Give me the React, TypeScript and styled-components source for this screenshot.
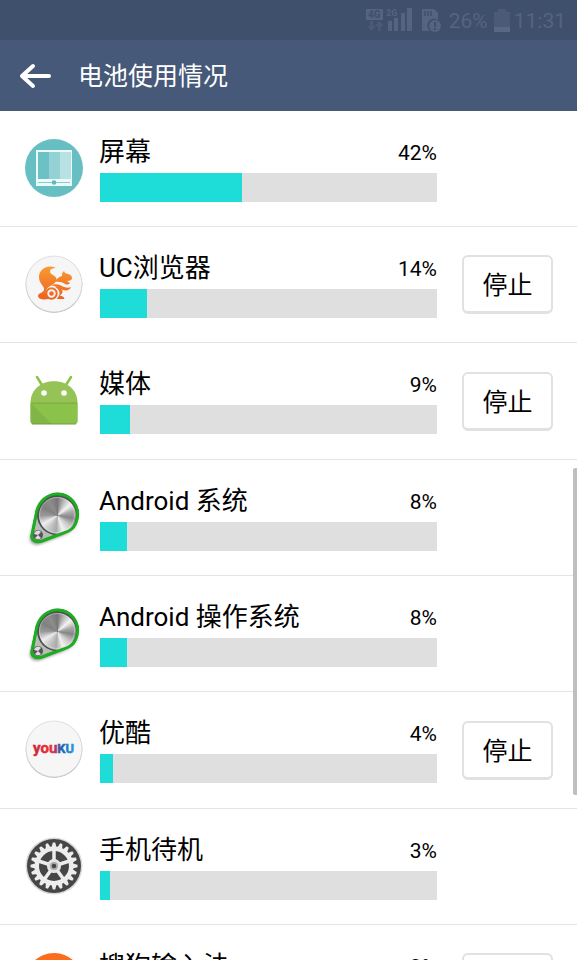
import React from "react";
import styled, { createGlobalStyle } from "styled-components";

const GlobalStyle = createGlobalStyle`
  * { box-sizing: border-box; }
  body {
    margin: 0;
    background: #fff;
    color: #000;
    font-family: Roboto, "Noto Sans CJK SC", sans-serif;
  }
`;

const Screen = styled.div`
  position: relative;
  display: flex;
  flex-direction: column;
  height: 100vh;
  overflow: hidden;
`;

const StatusBar = styled.div`
  display: flex;
  flex: none;
  align-items: center;
  justify-content: flex-end;
  height: 40px;
  padding-right: 11px;
  background: #3f506d;
  color: #55647f;
  font-size: 21px;
  line-height: 24px;
`;

const StatusText = styled.span`
  margin: 2px 6px 0 7px;
`;

const Clock = styled.time`
  margin: 2px 0 0 4px;
`;

const Header = styled.header`
  display: flex;
  flex: none;
  align-items: center;
  height: 71px;
  padding-left: 18px;
  background: #465978;
  color: #fff;
`;

const BackButton = styled.button`
  display: flex;
  padding: 0;
  border: 0;
  background: none;
  color: inherit;
`;

const Title = styled.h1`
  margin: 2px 0 0 25px;
  font-size: 25px;
  font-weight: 400;
  line-height: 36px;
`;

const List = styled.ul`
  flex: 1;
  min-height: 0;
  margin: 0;
  padding: 0;
  overflow-y: auto;
  scrollbar-width: none;
  list-style: none;
`;

const Row = styled.li`
  display: grid;
  grid-template-columns: 58px minmax(0, 1fr) 91px;
  align-items: center;
  height: 116px;
  padding: 0 24px 0 25px;
  border-bottom: 1px solid #e3e4e4;

  &:nth-child(3n) { height: 117px; }
`;

const AppIcon = styled.svg`
  display: block;
  width: 60px;
  height: 60px;
  margin: 0 0 2px -1px;
`;

const Usage = styled.div`
  align-self: start;
  margin: 22px 25px 0 17px;
`;

const UsageHead = styled.div`
  display: flex;
  align-items: center;
  justify-content: space-between;
  height: 40px;
`;

const Name = styled.span`
  padding-bottom: 2px;
  margin-left: -1px;
  font-size: 26px;
  line-height: 36px;
  white-space: nowrap;
`;

const Percent = styled.span`
  font-size: 21px;
  line-height: 36px;
`;

const Meter = styled.div`
  height: 29px;
  background: #dfdfdf;
`;

const Fill = styled.div`
  height: 100%;
  background: #1edcd8;
`;

const StopButton = styled.button`
  height: 59px;
  padding: 0 0 2px;
  border: 2px solid #dfe2e2;
  border-bottom-width: 3px;
  border-radius: 6px;
  background: #fff;
  color: #000;
  font: inherit;
  font-size: 25px;
`;

const ScrollThumb = styled.div`
  position: absolute;
  top: 468px;
  right: 0;
  width: 4px;
  height: 327px;
  border-radius: 2px 0 0 2px;
  background: #bfbfbf;
`;

function SignalIcon() {
  return (
    <svg width="47" height="24" viewBox="0 0 47 24" fill="currentColor" aria-hidden="true">
      <rect x="0" y="1" width="17" height="11" />
      <text x="2" y="10" fontSize="10" fontWeight="700" fill="#3f506d">4G</text>
      <path d="M4 13h3v5h3l-4.500 5L1 18h3zM12 23h3v-5h3l-4.500-5L9 18h3z" opacity=".55" />
      <text x="20" y="8" fontSize="9" fontWeight="700">2G</text>
      <path d="M22 13h4v10h-4zM28 10h4v13h-4zM35 5h4v18h-4zM41 0h5v23h-5z" />
    </svg>
  );
}

const CardSvg = styled.svg`
  margin-left: 9px;
`;

function CardIcon() {
  return (
    <CardSvg width="20" height="24" viewBox="0 0 20 24" fill="currentColor" aria-hidden="true">
      <path d="M0 1h12l4 4v7a6 6 0 0 0-8 11H0z" />
      <path d="M3 3v5M6 3v5M9 3v5" stroke="#3f506d" strokeWidth="1.500" />
      <circle cx="13" cy="18" r="6" />
      <path d="M13 14v5M13 20v2" stroke="#3f506d" strokeWidth="2" />
    </CardSvg>
  );
}

function BatteryIcon() {
  return (
    <svg width="16" height="23" viewBox="0 0 16 23" aria-hidden="true">
      <path d="M0 3h4V0h8v3h4v20H0z" fill="#4a5a77" />
      <path d="M0 18h16v5H0z" fill="#596883" />
    </svg>
  );
}

function ScreenIcon() {
  return (
    <>
      <circle cx="30" cy="30" r="29" fill="#68bfc3" />
      <path d="M12 12h36v36H12z" fill="#ecfafa" />
      <path d="M14 14h11v27H14z" fill="#6bc1c5" />
      <path d="M25 14h11v27H25z" fill="#94d1d4" />
      <path d="M36 14h11v27H36z" fill="#b7e1e2" />
      <path d="M14 44.500h32" stroke="#8ccace" />
      <circle cx="30" cy="44.500" r="2.300" fill="#60b9be" />
    </>
  );
}

function Disc() {
  return (
    <>
      <circle cx="30" cy="30.600" r="28.400" fill="#bdbdbd" />
      <circle cx="30" cy="30" r="28" fill="#f6f6f6" stroke="#d8d8d8" strokeWidth=".7" />
    </>
  );
}

function SquirrelIcon() {
  return (
    <>
      <Disc />
      <defs>
        <linearGradient id="squirrel" gradientUnits="userSpaceOnUse" x1="30" y1="13" x2="30" y2="46">
          <stop stopColor="#f89a32" />
          <stop offset="1" stopColor="#ee6021" />
        </linearGradient>
      </defs>
      <g fill="url(#squirrel)">
        <path d="M32 14C24 10 15 15 15 23c0 7 6 9 5 13-1 3-6 3-6 6 0 3 4 4 11 3-4-4-4-9-1-11.500 4-3 8-4 8.500-8 .5-4-6.500-4.500-6.500-8 0-2 2-3.500 6-3.500z" />
        <path d="M40 17c-2 1.500-2 3-2 5-3 .5-5 3-8 6 5-.5 8 0 11 2 2 1 4 .5 5-1-1-1-2-1-3-2 3 0 5-1 5-3 0-3-3.500-4-7-5z" />
        <path d="M27 31.500c6-3 10 0 13 1.500 3 1 5 1 7 0-1 3-4 4-8 3-4-1-6-4-12-4.500z" />
        <path d="M31 32.500c5 .5 8 3 7.500 6l-2.500 3.500c2 0 4 .5 4.500 3H32.500c3-3 4-6 2-9-1-1.500-2-2-3.500-3.500z" />
        <circle cx="27.500" cy="39.500" r="5.200" fill="none" stroke="url(#squirrel)" strokeWidth="2" />
        <circle cx="27.500" cy="39.500" r="2.300" />
      </g>
    </>
  );
}

function RobotIcon() {
  return (
    <g transform="translate(0 -3)">
      <path d="M18 18l-5-8M42 18l5-8" stroke="#8bc34a" strokeWidth="2.500" strokeLinecap="round" />
      <path d="M6.500 36C6.500 7 53.500 7 53.500 36v18q0 3-3 3H9.500q-3 0-3-3z" fill="#95c356" />
      <path d="M6.500 36h47v18q0 3-3 3H9.500q-3 0-3-3z" fill="#8bc24a" />
      <path d="M8 37l20 20H10q-3 0-3-3V37z" fill="#81b545" />
      <path d="M7 36h46" stroke="#6fa43a" strokeWidth=".8" />
      <path d="M8 57h44" stroke="#719e40" />
      <circle cx="20" cy="26" r="2.800" fill="#fff" />
      <circle cx="40" cy="26" r="2.800" fill="#fff" />
    </g>
  );
}

const wedges: [number, string][] = [
  [0, "#777"], [25, "#bbb"], [50, "#f4f4f4"], [75, "#aaa"], [100, "#858585"],
  [130, "#c8c8c8"], [160, "#f2f2f2"], [185, "#aaa"], [215, "#c9c9c9"],
  [240, "#eee"], [270, "#999"], [300, "#808080"], [330, "#8d8d8d"], [360, "#777"],
];

const Metal = styled.div`
  width: 37px;
  height: 37px;
  border-radius: 50%;
  background: conic-gradient(${wedges.map(([angle, shade]) => `${shade} ${angle}deg`).join(", ")});
`;

function DialIcon({ id }: { id: string }) {
  return (
    <>
      <defs>
        <filter id={id} x="-20%" y="-20%" width="140%" height="140%">
          <feGaussianBlur stdDeviation="1.500" />
        </filter>
      </defs>
      <path d="M12 29C14 12 25 7 35 8c14 1 22 15 18 27-2 7-7 10-13 13l-24 9c-5 2-11-1-10-7z" fill="#555" opacity=".65" filter={`url(#${id})`} />
      <path d="M12 28C14 14 24 7 34 7c13 0 22 13 19 25-2 9-7 12-14 14l-21 8c-6 2-11-1-10-6z" fill="#b8bcb8" stroke="#1cad20" strokeWidth="3" />
      <circle cx="33" cy="28" r="20" fill="#4d514d" />
      <foreignObject x="14.500" y="9.500" width="37" height="37"><Metal /></foreignObject>
      <circle cx="33" cy="28" r="17.500" fill="none" stroke="#eee" strokeWidth=".6" opacity=".7" />
      <path d="M12 28C14 14 24 7 34 7c13 0 22 13 19 25-2 9-7 12-14 14l-21 8c-6 2-11-1-10-6z" fill="none" stroke="#1cad20" strokeWidth="2.500" />
      <circle cx="14" cy="48" r="5" fill="#555" />
      <path d="M10 47a4 4 0 0 1 7-2l-3 3 3 3a4 4 0 0 1-6 0l3-3z" fill="#ddd" />
    </>
  );
}

function YoukuIcon() {
  return (
    <>
      <Disc />
      <defs>
        <linearGradient id="youku">
          <stop stopColor="#ca2740" />
          <stop offset=".45" stopColor="#ed3038" />
          <stop offset=".6" stopColor="#7c4390" />
          <stop offset=".7" stopColor="#1767b2" />
          <stop offset="1" stopColor="#2b9be2" />
        </linearGradient>
      </defs>
      <text x="9" y="34" fill="url(#youku)" stroke="url(#youku)" strokeWidth=".5" fontWeight="700" fontSize="15">
        you<tspan fontSize="13">KU</tspan>
      </text>
    </>
  );
}

function GearIcon() {
  return (
    <>
      <circle cx="30" cy="30" r="28.500" fill="#d9d9d9" />
      <circle cx="30" cy="30" r="27" fill="#464646" />
      <g fill="#ededed">
        <circle cx="30" cy="30" r="19.500" />
        {Array.from({ length: 20 }, (_, i) => (
          <path key={i} d="M27.300 12l1.500-5.500h2.400l1.500 5.500z" transform={`rotate(${i * 18} 30 30)`} />
        ))}
      </g>
      <circle cx="30" cy="30" r="11" fill="none" stroke="#464646" strokeWidth="8" />
      {Array.from({ length: 5 }, (_, i) => (
        <path key={i} d="M30 30V13" stroke="#ededed" strokeWidth="3.500" transform={`rotate(${i * 72} 30 30)`} />
      ))}
      <circle cx="30" cy="30" r="6.500" fill="#e4e4e4" />
      <circle cx="30" cy="30" r="4" fill="#aaa" />
      <circle cx="30" cy="30" r="2.200" fill="#444" />
    </>
  );
}

function SogouIcon() {
  return <circle cx="30" cy="30" r="29" fill="#fa6d1d" />;
}

type App = { name: string; percent: number; icon: React.ReactNode; stoppable?: boolean };

const apps: App[] = [
  { name: "屏幕", percent: 42, icon: <ScreenIcon /> },
  { name: "UC浏览器", percent: 14, icon: <SquirrelIcon />, stoppable: true },
  { name: "媒体", percent: 9, icon: <RobotIcon />, stoppable: true },
  { name: "Android 系统", percent: 8, icon: <DialIcon id="dial-system" /> },
  { name: "Android 操作系统", percent: 8, icon: <DialIcon id="dial-os" /> },
  { name: "优酷", percent: 4, icon: <YoukuIcon />, stoppable: true },
  { name: "手机待机", percent: 3, icon: <GearIcon /> },
  { name: "搜狗输入法", percent: 3, icon: <SogouIcon />, stoppable: true },
];

export default function BatteryUsage() {
  return (
    <Screen>
      <GlobalStyle />
      <StatusBar>
        <SignalIcon />
        <CardIcon />
        <StatusText>26%</StatusText>
        <BatteryIcon />
        <Clock>11:31</Clock>
      </StatusBar>
      <Header>
        <BackButton aria-label="返回">
          <svg width="35" height="30" viewBox="0 0 35 30" fill="none" stroke="currentColor" strokeWidth="4" strokeLinecap="round" strokeLinejoin="round" aria-hidden="true">
            <path d="M15 5L4 15l11 10M5 15h26" />
          </svg>
        </BackButton>
        <Title>电池使用情况</Title>
      </Header>
      <List>
        {apps.map((app) => (
          <Row key={app.name}>
            <AppIcon viewBox="0 0 60 60" aria-hidden="true">{app.icon}</AppIcon>
            <Usage>
              <UsageHead>
                <Name>{app.name}</Name>
                <Percent>{app.percent}%</Percent>
              </UsageHead>
              <Meter role="meter" aria-label={app.name} aria-valuenow={app.percent} aria-valuemin={0} aria-valuemax={100}>
                <Fill style={{ width: `${app.percent}%` }} />
              </Meter>
            </Usage>
            {app.stoppable && <StopButton aria-label={`停止 ${app.name}`}>停止</StopButton>}
          </Row>
        ))}
      </List>
      <ScrollThumb />
    </Screen>
  );
}
